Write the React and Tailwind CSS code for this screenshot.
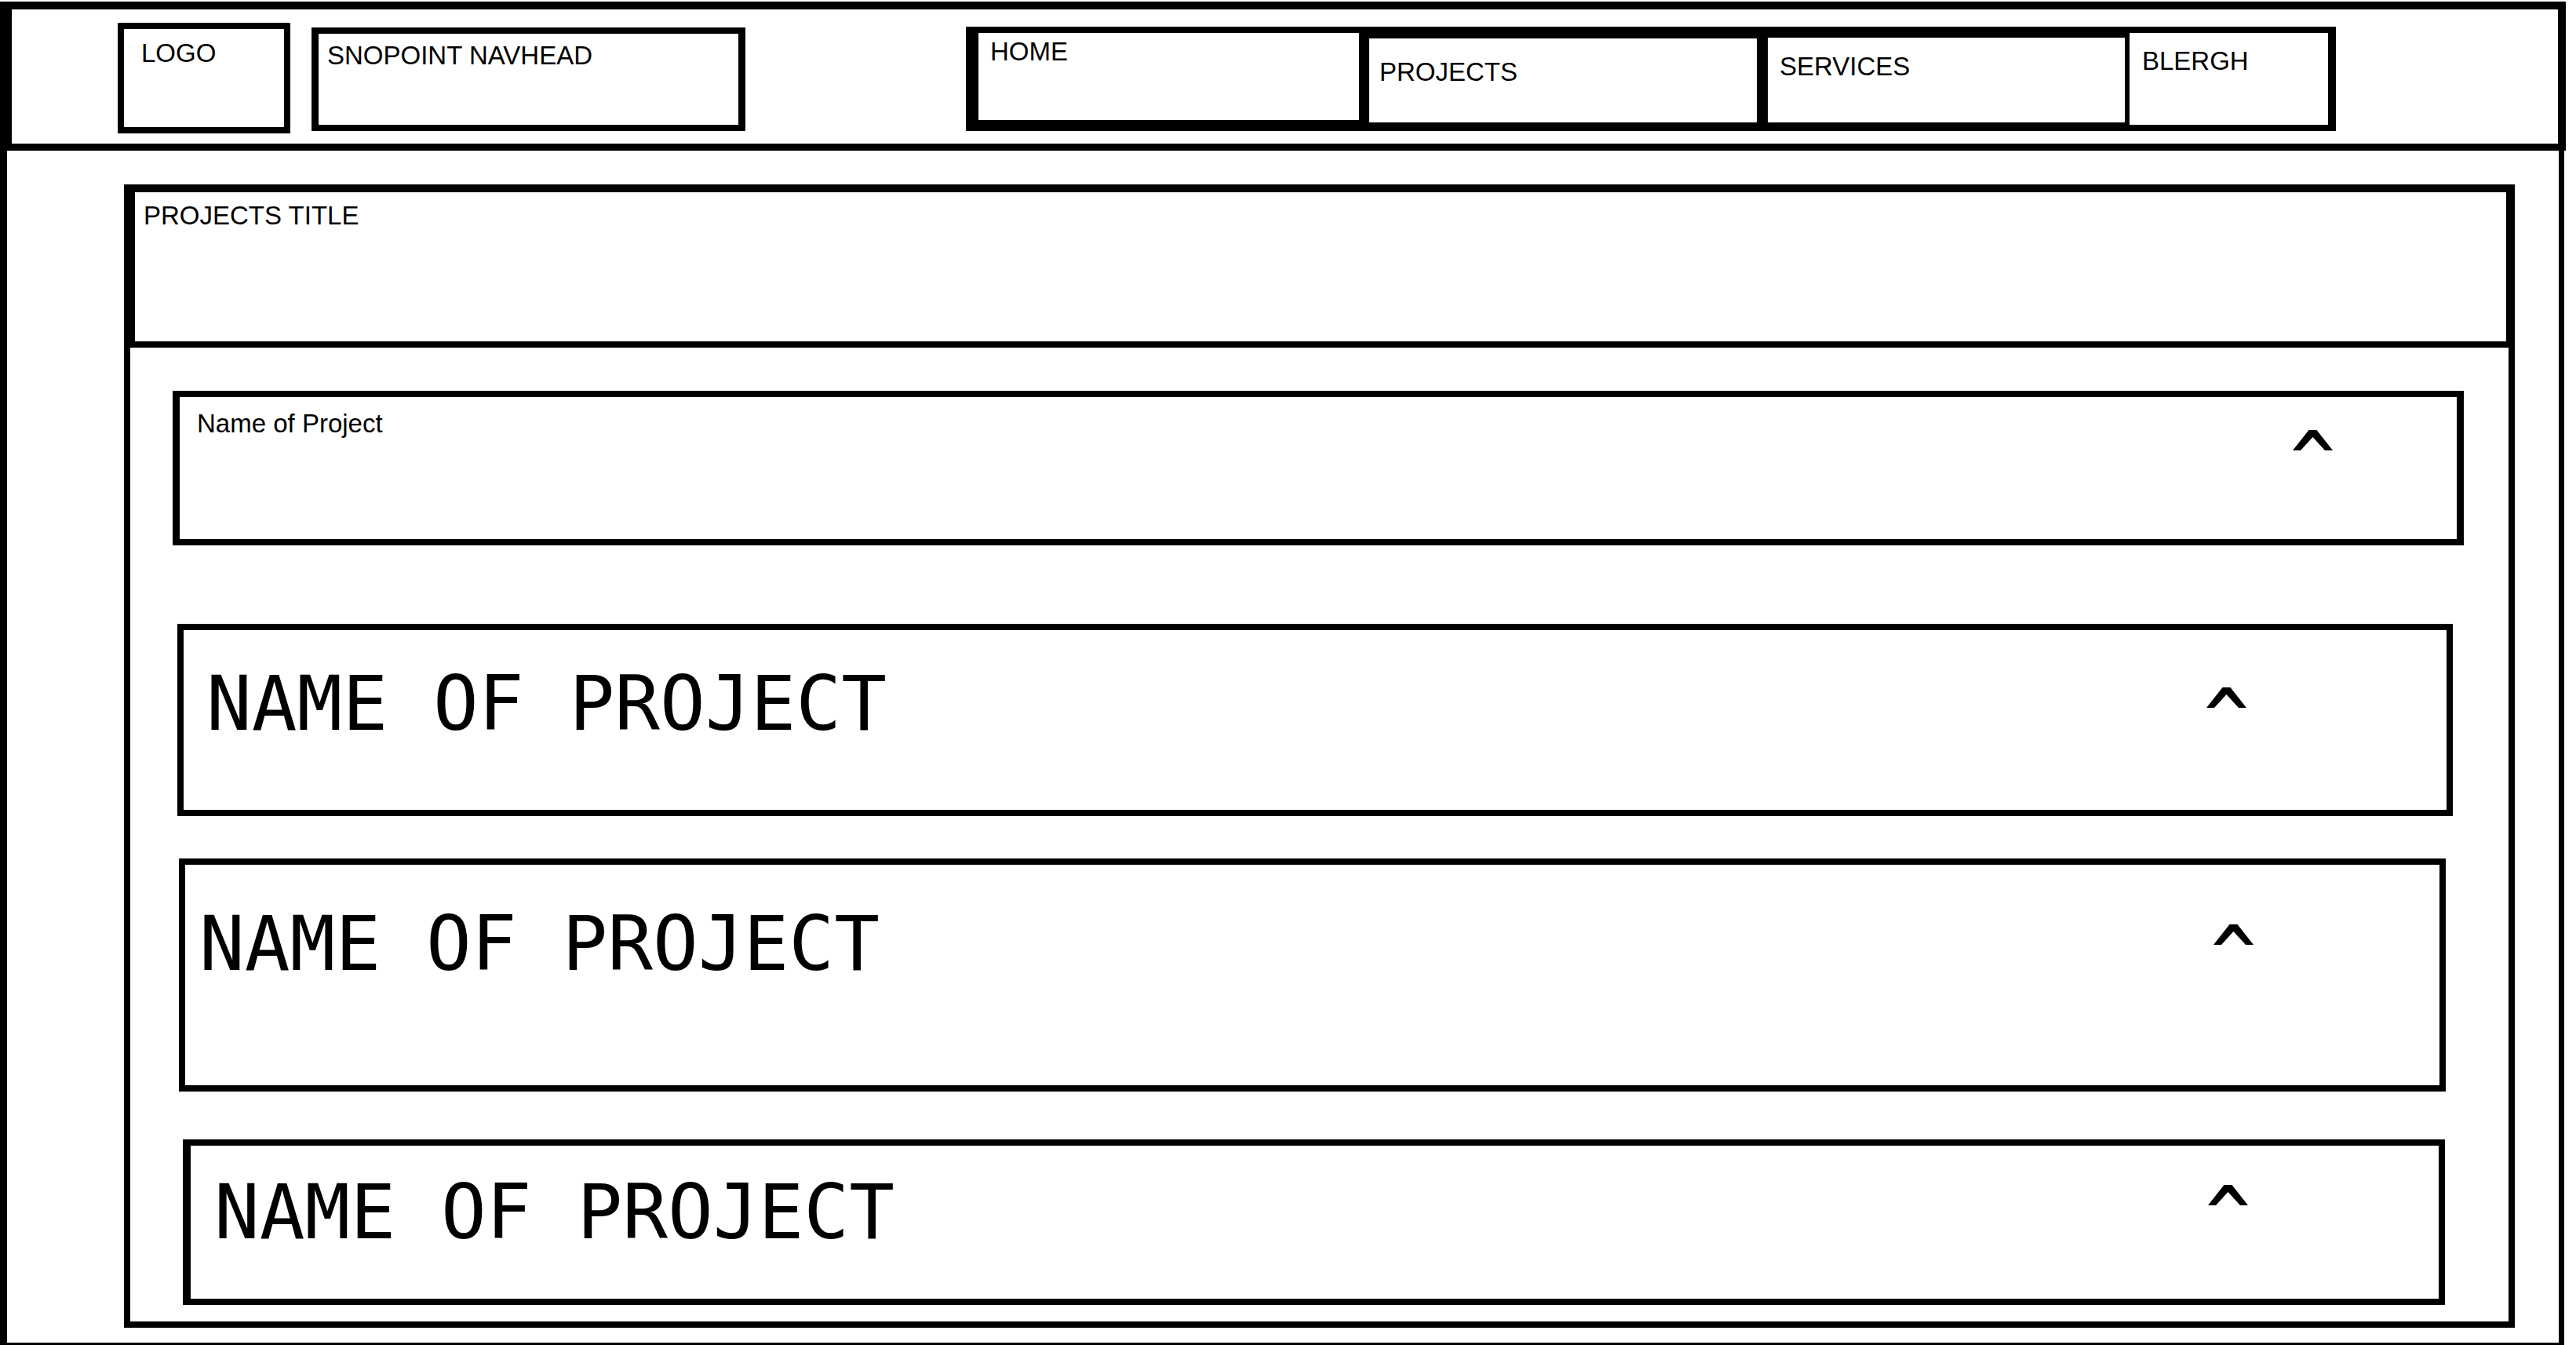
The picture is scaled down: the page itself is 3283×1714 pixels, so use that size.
import React from "react";

function Chevron({ className }) {
  return (
    <svg className={className} width="51" height="26" viewBox="0 0 51 26" aria-hidden="true">
      <polygon points="0,26 20.5,0 30.5,0 51,26 41,26 25.5,9 10,26" fill="#000" />
    </svg>
  );
}

export default function App() {
  return (
    <div className="w-[3283px] h-[1714px] bg-white text-black overflow-hidden font-['Liberation_Sans',Arial,sans-serif]">
      {/* Header */}
      <header className="mt-[2px] w-[3270px] h-[190px] border-black border-t-[10px] border-l-[15px] border-r-[10px] border-b-[9px] flex items-start">
        <div className="ml-[135px] mt-[17px] w-[220px] h-[141px] border-[8px] border-black pl-[22px] pt-[14px]">
          <span className="block text-[33px] leading-none">LOGO</span>
        </div>
        <div className="ml-[27px] mt-[23px] w-[553px] h-[132px] border-black border-y-[8px] border-x-[9px] pl-[11px] pt-[11px]">
          <span className="block text-[33px] leading-none">SNOPOINT NAVHEAD</span>
        </div>
        <nav className="ml-[281px] mt-[22px] w-[1746px] h-[133px] bg-black flex items-start">
          <div className="ml-[16px] mt-[8px] w-[485px] h-[111px] bg-white pl-[15px] pt-[7px]">
            <span className="block text-[33px] leading-none">HOME</span>
          </div>
          <div className="ml-[13px] mt-[15px] w-[494px] h-[107px] bg-white pl-[13px] pt-[26px]">
            <span className="block text-[33px] leading-none">PROJECTS</span>
          </div>
          <div className="ml-[14px] mt-[14px] w-[455px] h-[108px] bg-white pl-[15px] pt-[20px]">
            <span className="block text-[33px] leading-none">SERVICES</span>
          </div>
          <div className="ml-[6px] mt-[8px] w-[253px] h-[117px] bg-white pl-[16px] pt-[19px]">
            <span className="block text-[33px] leading-none">BLERGH</span>
          </div>
        </nav>
      </header>

      {/* Body */}
      <main className="w-[3268px] h-[1522px] border-black border-l-[9px] border-r-[7px] border-b-[3px] pt-[43px] pl-[149px]">
        <section className="w-[3047px] flex flex-col">
          <div className="h-[208px] border-black border-t-[10px] border-l-[14px] border-r-[11px] border-b-[8px] pl-[11px] pt-[13px]">
            <h1 className="text-[33px] leading-none font-normal">PROJECTS TITLE</h1>
          </div>
          <div className="h-[1249px] border-black border-l-[8px] border-r-[8px] border-b-[8px] flex flex-col items-start">
            {/* Box 1 */}
            <div className="ml-[54px] mt-[55px] w-[2920px] h-[197px] border-black border-y-[8px] border-x-[9px] flex items-start">
              <span className="ml-[22px] mt-[17px] text-[33px] leading-none">Name of Project</span>
              <Chevron className="ml-auto mr-[158px] mt-[42px] shrink-0" />
            </div>
            {/* Box 2 */}
            <div className="ml-[60px] mt-[100px] w-[2900px] h-[245px] border-[8px] border-black flex items-start">
              <span className="ml-[29px] mt-[46px] text-[96px] leading-none font-['DejaVu_Sans_Mono',monospace]">NAME OF PROJECT</span>
              <Chevron className="ml-auto mr-[255px] mt-[73px] shrink-0" />
            </div>
            {/* Box 3 */}
            <div className="ml-[62px] mt-[54px] w-[2889px] h-[297px] border-[8px] border-black flex items-start">
              <span className="ml-[18px] mt-[53px] text-[96px] leading-none font-['DejaVu_Sans_Mono',monospace]">NAME OF PROJECT</span>
              <Chevron className="ml-auto mr-[237px] mt-[76px] shrink-0" />
            </div>
            {/* Box 4 */}
            <div className="ml-[67px] mt-[61px] w-[2883px] h-[211px] border-black border-y-[8px] border-r-[8px] border-l-[10px] flex items-start">
              <span className="ml-[30px] mt-[37px] text-[96px] leading-none font-['DejaVu_Sans_Mono',monospace]">NAME OF PROJECT</span>
              <Chevron className="ml-auto mr-[243px] mt-[50px] shrink-0" />
            </div>
          </div>
        </section>
      </main>
    </div>
  );
}
